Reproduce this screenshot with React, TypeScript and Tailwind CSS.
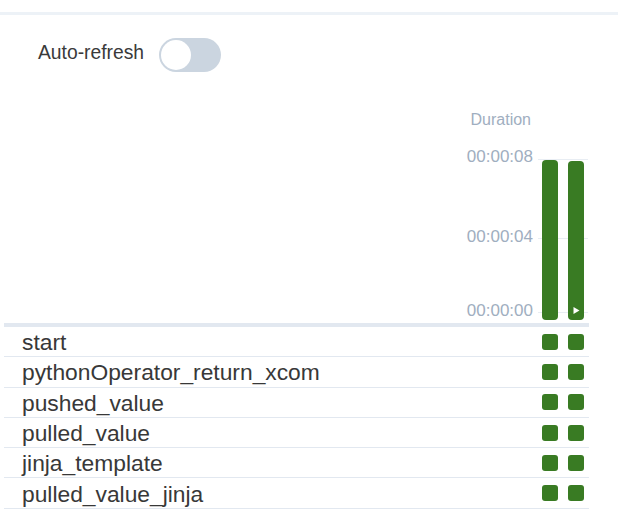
import React from "react";

const tasks = [
  "start",
  "pythonOperator_return_xcom",
  "pushed_value",
  "pulled_value",
  "jinja_template",
  "pulled_value_jinja",
];

const ticks = [
  { label: "00:00:08", labelTop: "top-[47px]", lineTop: "top-[59px]" },
  { label: "00:00:04", labelTop: "top-[127px]", lineTop: "top-[138px]" },
  { label: "00:00:00", labelTop: "top-[201px]", lineTop: "top-[212px]" },
];

export default function App() {
  return (
    <div className="w-[618px] h-[524px] bg-white overflow-hidden font-['Liberation_Sans',Arial,sans-serif]">
      <div className="h-[12px]" />
      <div className="h-[3px] bg-[#edf2f7]" />

      <div className="mt-[23px] flex items-center pl-[38px] gap-[15px]">
        <span className="text-[19.3px] leading-[24px] text-[#3a3a3a] mb-[4px]">Auto-refresh</span>
        <div className="w-[62px] h-[34px] rounded-full bg-[#cbd5e0] p-[2px] flex items-center">
          <div className="w-[30px] h-[30px] rounded-full bg-white" />
        </div>
      </div>

      <div className="mt-[28px] ml-[4px] w-[585px] h-[223px] relative">
        <span className="absolute right-[58px] top-[10px] text-[16px] leading-[20px] text-[#a0aec0]">
          Duration
        </span>
        {ticks.map((t) => (
          <React.Fragment key={t.label}>
            <span
              className={`absolute right-[56px] ${t.labelTop} text-[17px] leading-[20px] text-[#a0aec0]`}
            >
              {t.label}
            </span>
            <div className={`absolute left-[534px] w-[50px] h-px bg-[#e8edf3] ${t.lineTop}`} />
          </React.Fragment>
        ))}
        <div className="absolute bottom-[3px] right-[5px] flex items-end gap-[10px]">
          <div className="w-[16px] h-[160px] rounded-[4px] bg-[#397b23]" />
          <div className="w-[16px] h-[159px] rounded-[4px] bg-[#397b23] flex flex-col justify-end items-center pb-[6px]">
            <svg width="7" height="7" viewBox="0 0 7 7" className="ml-[1px]">
              <path d="M0.5 0 L6.5 3.5 L0.5 7 Z" fill="#ffffff" />
            </svg>
          </div>
        </div>
      </div>

      <div className="ml-[4px] w-[585px] h-[4px] bg-[#e2e8f0]" />

      <div className="ml-[4px] w-[585px] flex flex-col">
        {tasks.map((name) => (
          <div
            key={name}
            className="h-[30.3px] border-b border-[#e2e8f0] flex items-center justify-between pl-[18px] pr-[5px]"
          >
            <span className="text-[22.8px] leading-[26px] text-[#383838] whitespace-nowrap pt-[1px]">{name}</span>
            <div className="flex gap-[10px]">
              <div className="w-[16px] h-[16px] rounded-[3px] bg-[#397b23]" />
              <div className="w-[16px] h-[16px] rounded-[3px] bg-[#397b23]" />
            </div>
          </div>
        ))}
      </div>
    </div>
  );
}
